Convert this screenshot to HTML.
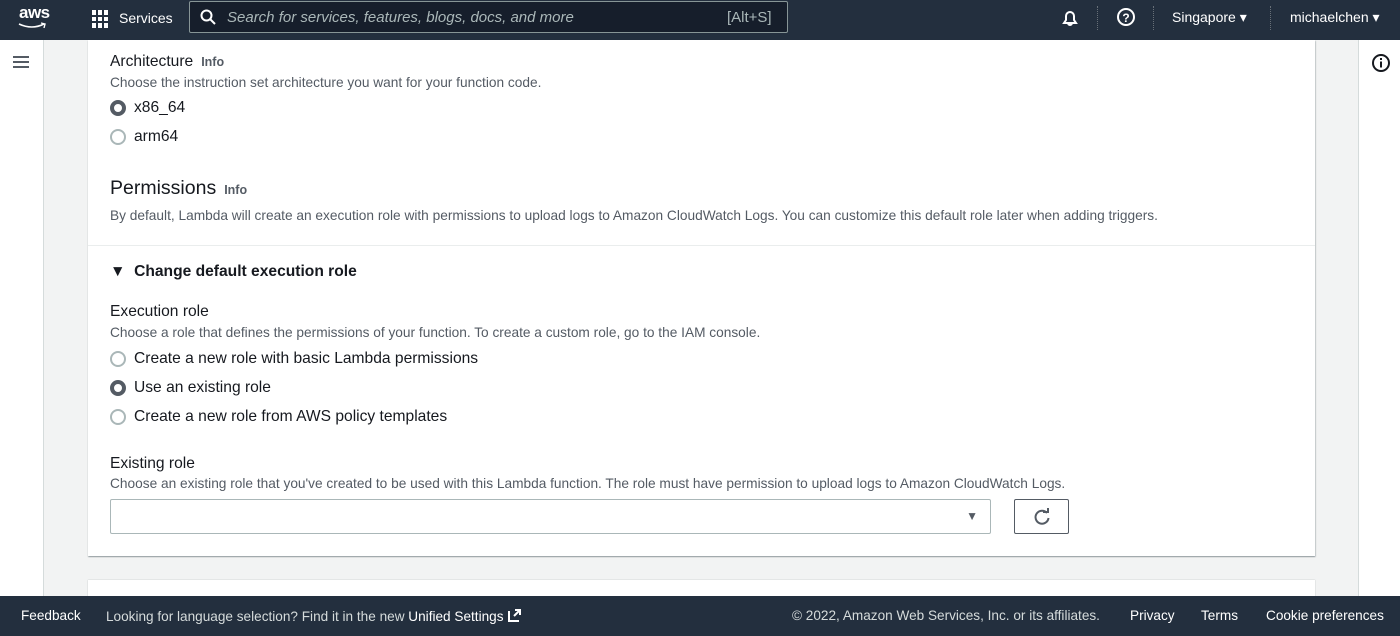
<!DOCTYPE html><html><head><style>
*{box-sizing:border-box;margin:0;padding:0}
body{width:1400px;height:636px;overflow:hidden;font-family:"Liberation Sans",sans-serif;background:#f2f3f3;position:relative;color:#16191f}
.top{position:absolute;top:0;left:0;width:1400px;height:40px;background:#232f3e;color:#fff;font-size:14px}
.top>*{position:absolute}
.left{position:absolute;top:40px;left:0;width:44px;height:556px;background:#fff;border-right:1px solid #d5dbdb}
.right{position:absolute;top:40px;left:1358px;width:42px;height:556px;background:#fff;border-left:1px solid #d5dbdb}
.card{position:absolute;left:88px;width:1227px;background:#fff;box-shadow:0 1px 1px rgba(0,28,36,.3),1px 1px 1px rgba(0,28,36,.15)}
.t{position:absolute;white-space:nowrap}
.lbl{font-size:15.6px;color:#16191f}
.desc{font-size:13.7px;color:#545b64}
.info{font-size:12.5px;font-weight:bold;color:#545b64;margin-left:8px}
.radio{position:absolute;width:16px;height:16px;border-radius:50%;border:2px solid #aab7b8;background:#fff}
.radio.on{border:4.5px solid #545b64}
.foot{position:absolute;top:596px;left:0;width:1400px;height:40px;background:#232f3e;color:#d5dbdb;font-size:13.6px}
.foot span{position:absolute;top:12px;white-space:nowrap}
</style></head><body>
<div class="top">
 <div style="left:19px;top:3px;font-size:17px;font-weight:bold;letter-spacing:-.5px">aws</div>
 <svg style="left:18px;top:22px" width="30" height="8"><path d="M1 2 Q14 8 26 2" stroke="#fff" stroke-width="1.6" fill="none"/><path d="M23 1 L27 2 L26 6" stroke="#fff" stroke-width="1.4" fill="none"/></svg>
 <div style="left:92px;top:10px;width:18px;height:18px;display:grid;grid-template-columns:repeat(3,4px);gap:2px"><i style="background:#fff"></i><i style="background:#fff"></i><i style="background:#fff"></i><i style="background:#fff"></i><i style="background:#fff"></i><i style="background:#fff"></i><i style="background:#fff"></i><i style="background:#fff"></i><i style="background:#fff"></i></div>
 <div style="left:119px;top:10px">Services</div>
 <div style="left:189px;top:1px;width:599px;height:32px;background:#161e2b;border:1px solid #879596;border-radius:2px"></div>
 <svg style="left:200px;top:9px" width="16" height="16"><circle cx="6.5" cy="6.5" r="5" stroke="#fff" stroke-width="2" fill="none"/><path d="M10 10 L15 15" stroke="#fff" stroke-width="2"/></svg>
 <div style="left:227px;top:9px;font-style:italic;color:#aab7b8;font-size:15px">Search for services, features, blogs, docs, and more</div>
 <div style="left:727px;top:9px;color:#aab7b8;font-size:15px">[Alt+S]</div>
 <svg style="left:1060px;top:8px" width="20" height="20"><path d="M4 15 L6 12 V8 A4 4 0 0 1 14 8 V12 L16 15 Z M8 15 A2 2 0 0 0 12 15" stroke="#fff" stroke-width="2" fill="none"/></svg>
 <div style="left:1097px;top:6px;width:1px;height:24px;border-left:1px dotted #687078"></div>
 <svg style="left:1116px;top:7px" width="20" height="20"><circle cx="10" cy="10" r="8" stroke="#fff" stroke-width="2" fill="none"/><text x="10" y="15" fill="#fff" font-size="12" font-weight="bold" text-anchor="middle" font-family="Liberation Sans">?</text></svg>
 <div style="left:1153px;top:6px;width:1px;height:24px;border-left:1px dotted #687078"></div>
 <div style="left:1172px;top:9px">Singapore ▾</div>
 <div style="left:1270px;top:6px;width:1px;height:24px;border-left:1px dotted #687078"></div>
 <div style="left:1290px;top:9px">michaelchen ▾</div>
</div>
<div class="left"><div style="position:absolute;left:13px;top:16px;width:16px;height:12px;border-top:2px solid #545b64;border-bottom:2px solid #545b64"><div style="margin-top:3px;border-top:2px solid #545b64"></div></div></div>
<div class="right"><svg style="position:absolute;left:12px;top:13px" width="20" height="20"><circle cx="10" cy="10" r="8" stroke="#16191f" stroke-width="2" fill="none"/><rect x="9" y="8.5" width="2" height="6" fill="#16191f"/><rect x="9" y="5" width="2" height="2" fill="#16191f"/></svg></div>
<div class="card" style="top:40px;height:516px">
 <div class="t lbl" style="left:22px;top:13px">Architecture<span class="info">Info</span></div>
 <div class="t desc" style="left:22px;top:35px">Choose the instruction set architecture you want for your function code.</div>
 <div class="radio on" style="left:22px;top:60px"></div><div class="t lbl" style="left:46px;top:59px">x86_64</div>
 <div class="radio" style="left:22px;top:89px"></div><div class="t lbl" style="left:46px;top:88px">arm64</div>
 <div class="t" style="left:22px;top:137px;font-size:19.5px">Permissions<span class="info">Info</span></div>
 <div class="t desc" style="left:22px;top:168px">By default, Lambda will create an execution role with permissions to upload logs to Amazon CloudWatch Logs. You can customize this default role later when adding triggers.</div>
 <div style="position:absolute;left:0;top:205px;width:100%;border-top:1px solid #eaeded"></div>
 <div class="t lbl" style="left:22px;top:223px;font-weight:bold">▼&nbsp; Change default execution role</div>
 <div class="t lbl" style="left:22px;top:263px">Execution role</div>
 <div class="t desc" style="left:22px;top:285px">Choose a role that defines the permissions of your function. To create a custom role, go to the IAM console.</div>
 <div class="radio" style="left:22px;top:311px"></div><div class="t lbl" style="left:46px;top:310px">Create a new role with basic Lambda permissions</div>
 <div class="radio on" style="left:22px;top:340px"></div><div class="t lbl" style="left:46px;top:339px">Use an existing role</div>
 <div class="radio" style="left:22px;top:369px"></div><div class="t lbl" style="left:46px;top:368px">Create a new role from AWS policy templates</div>
 <div class="t lbl" style="left:22px;top:415px">Existing role</div>
 <div class="t desc" style="left:22px;top:436px">Choose an existing role that you've created to be used with this Lambda function. The role must have permission to upload logs to Amazon CloudWatch Logs.</div>
 <div style="position:absolute;left:22px;top:459px;width:881px;height:35px;border:1px solid #aab7b8;border-radius:2px"><div style="position:absolute;right:12px;top:9px;font-size:12px;color:#545b64">▼</div></div>
 <div style="position:absolute;left:926px;top:459px;width:55px;height:35px;border:1px solid #545b64;border-radius:2px"><svg style="position:absolute;left:18px;top:8px" width="18" height="18"><path d="M14 5 A6.5 6.5 0 1 0 15.5 10" stroke="#545b64" stroke-width="2" fill="none"/><path d="M10 4 H15 V0" stroke="#545b64" stroke-width="2" fill="none"/></svg></div>
</div>
<div class="card" style="top:580px;height:30px;box-shadow:0 0 1px rgba(0,28,36,.3)"></div>
<div class="foot">
 <span style="left:21px;color:#fff">Feedback</span>
 <span style="left:106px">Looking for language selection? Find it in the new <b style="color:#fff;font-weight:normal">Unified Settings</b> <svg width="15" height="15" style="vertical-align:-2px"><path d="M2 3 V13 H12 M7 8 L13 2 M8 2 H13 V7" stroke="#fff" stroke-width="2" fill="none"/></svg></span>
 <span style="left:792px">© 2022, Amazon Web Services, Inc. or its affiliates.</span>
 <span style="left:1130px;color:#fff">Privacy</span>
 <span style="left:1201px;color:#fff">Terms</span>
 <span style="left:1266px;color:#fff">Cookie preferences</span>
</div>
</body></html>
